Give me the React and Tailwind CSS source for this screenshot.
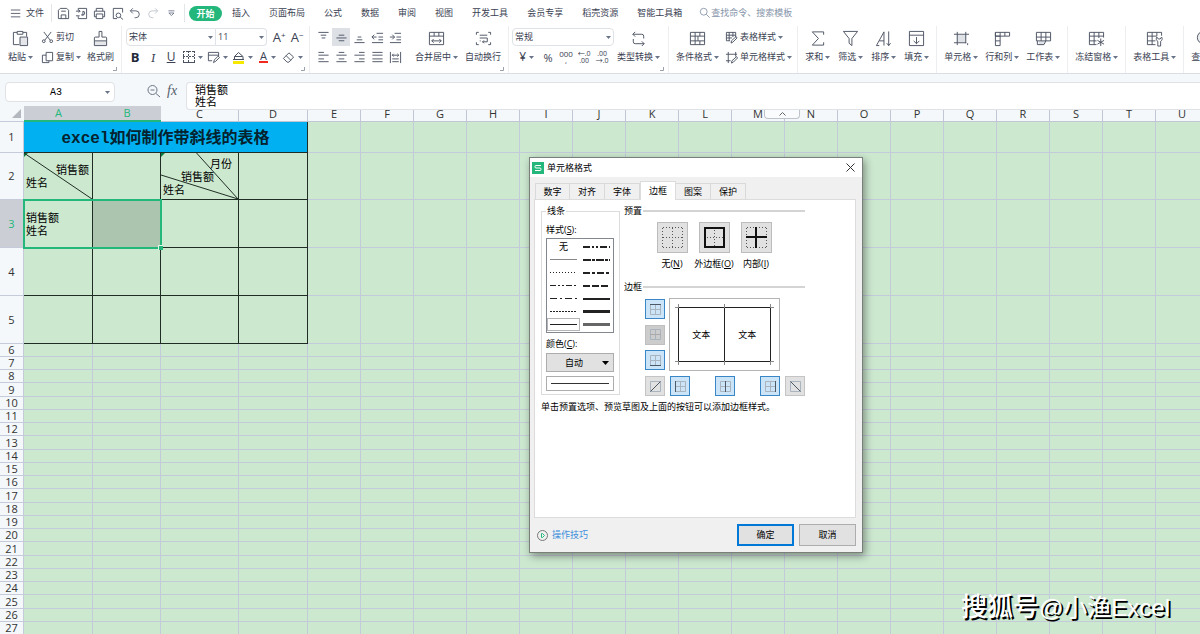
import React, { useState } from 'react'

const tabs = ['插入', '页面布局', '公式', '数据', '审阅', '视图', '开发工具', '会员专享', '稻壳资源', '智能工具箱']

const columns = 'ABCDEFGHIJKLMNOPQRSTU'.split('')

const smallRows = Array.from({ length: 22 }, (_, i) => i + 6)

const lineStyles = [
  null,
  { w: 2, dash: '7 2 2 2 2 2' },
  { w: 1, dash: '', color: '#888' },
  { w: 2, dash: '8 1 3 1' },
  { w: 1, dash: '1 2' },
  { w: 2, dash: '7 2 3 2' },
  { w: 1, dash: '6 2 2 2 2 2' },
  { w: 2, dash: '7 2' },
  { w: 1, dash: '7 3 2 3' },
  { w: 2, dash: '' },
  { w: 1, dash: '2 1' },
  { w: 3, dash: '' },
  { w: 1, dash: '' },
  { w: 3, dash: '', color: '#666' },
]

const icons = {
  menu: 'M1 3.5h11M1 7.5h11M1 11.5h11',
  save: 'M1.5 12.5v-9l2-2h7l2 2v9zM4.5 12.5v-4h5v4M4.5 4.5h5',
  output: 'M3.5 4V1.5h9v11h-9V10M1 4.5h4.500M4 3l1.500 1.500L4 6M1 9.500h4M8.500 4.500a2 2 0 1 1 0 4h-2M8.500 4.500v5',
  print: 'M3.500 4.500v-3h7v3M3.500 10.500h-2v-6h11v6h-2M3.500 7.500h7v5h-7z',
  preview: 'M12.500 6V1.500h-10v11h4M10.500 9a2.500 2.500 0 1 1-5 0a2.500 2.500 0 0 1 5 0M10 11l3 2.500',
  undo: 'M4.500 1.500l-3 3l3 3M2 4.500h6a4 4 0 0 1 0 8H6.500',
  redo: 'M9.500 1.500l3 3l-3 3M12 4.500H6a4 4 0 0 0 0 8h1.500',
  more: 'M4 4.500h7M4.500 7l3 3l3-3z',
  search: 'M9.500 5.500a4 4 0 1 1-8 0a4 4 0 0 1 8 0M8.500 8.500l4 4',
  zoom: 'M10 6a4.500 4.500 0 1 1-9 0a4.500 4.500 0 0 1 9 0M9 9.500l4 3.500M3.500 6h4',
  cut: 'M3 1l7 9M11 1L4 10M4.500 11a1.500 1.500 0 1 1-3 0a1.500 1.500 0 0 1 3 0M12.500 11a1.500 1.500 0 1 1-3 0a1.500 1.500 0 0 1 3 0',
  copy: 'M5.500 1.500h7v9h-7zM5.500 4.500h-4v8h7v-2',
  drawBorder: 'M12.500 6V1.500h-11v9h4M1.500 4.500h11M7 12.500l1-3l4-4l1.500 1.500l-4 4z',
  eraser: 'M1.500 8l6-6l5 4.500l-5 5.500h-2zM4.500 5l5 5',
  top: 'M1.500 1.500h11M4 4.500h6M5 7.500h4',
  middle: 'M4 4.500h6M1.500 7.500h11M4 10.500h6',
  bottom: 'M5 6.500h4M4 9.500h6M1.500 12.500h11',
  outdent: 'M6 2.500h7M8 6.500h5M8 9.500h5M1 12.500h12M6 6.500H1M3.500 4L1 6.500l2.500 2.500',
  indent: 'M6 2.500h7M8 6.500h5M8 9.500h5M1 12.500h12M1 6.500h5M3.500 4L6 6.500L3.500 9',
  left: 'M1.500 1.500h6M1.500 4.500h11M1.500 8.500h6M1.500 11.500h11',
  center: 'M4 1.500h6M1.500 4.500h11M4 8.500h6M1.500 11.500h11',
  right: 'M6.500 1.500h6M1.500 4.500h11M6.500 8.500h6M1.500 11.500h11',
  justify: 'M1.500 1.500h11M1.500 4.500h11M1.500 8.500h11M1.500 11.500h11',
  spread: 'M1.500 1v12M12.500 1v12M3.500 4.500h7M5 3L3.500 4.500L5 6M9 3l1.500 1.500L9 6M3.500 8.500h7M3.500 11.500h7',
  tableStyle: 'M1.500 1.500h10v5M1.500 1.500v9h4M1.500 4.500h10M1.500 7.500h6M4.500 1.500v9M8.500 1.500v5M6.500 13l.5-2.500l5-4.500l1 1.500l-4.500 4.500z',
  cellStyle: 'M3.500 1v12M1 3.500h12M11.500 1v5M1 10.500h5M7 13l.5-2.500l5-4.500l1 1.500l-4.500 4.500z',
}

// larger drawings on an 18px box
const bigIcons = {
  paste: (
    <>
      <path d="M8 8h8v8H8z" fill="#e4e6ea" stroke="none" />
      <path d="M5.500 2.500h-4v13h6M11.500 2.500h4V7M5.500 1.500h6v3h-6zM8.500 7.500h8v9h-8z" />
    </>
  ),
  painter: (
    <>
      <path d="M3 12h12l1 4H2z" fill="#e4e6ea" stroke="none" />
      <path d="M7.500 1.500h3v6h4a1 1 0 0 1 1 1v3h-13v-3a1 1 0 0 1 1-1h4zM2.500 11.500v5h13v-5" />
    </>
  ),
  merge: <path d="M1.500 2.500h15v13h-15zM1.500 6.500h15M6.500 2.500v4M11.500 2.500v4M4 11.500h10M6 9.500l-2 2l2 2M12 9.500l2 2l-2 2" />,
  wrap: <path d="M1.500 5V2.500H4M14 2.500h2.500V5M1.500 13v2.500H4M14 15.500h2.500V13M5 5.500h8M5 8.500h8v4H8M9.500 11L8 12.500L9.500 14M5 11.500h1" />,
  convert: <path d="M3 4.500h9.500a2 2 0 0 1 2 2V9M5.500 2L3 4.500L5.500 7M15 14.500H5.500a2 2 0 0 1-2-2V9.500M12.500 12l2.500 2.500l-2.500 2.500" />,
  condition: <path d="M1.500 2.500h15v13h-15zM1.500 6.500h15M1.500 11.500h15M6.500 2.500v9M11.500 2.500v4M9.500 6.500v5M6.500 11.500v4M11.500 11.500v4" />,
  sum: <path d="M15.500 5V2h-12l6.500 7l-6.500 7h12v-3" />,
  filter: <path d="M1.500 1.500h15l-6 7.500v7.500l-3-2.500V9z" />,
  sort: <path d="M1.500 16.500l8-14.500v14.500M4.500 11.500h5M1.500 16.500h3M14.500 1.500v15M12.500 14l2 2.500l2-2.500" />,
  fill: <path d="M1.500 1.500h15v15h-15zM1.500 5.500h15M9 7.500v7M6 11.500l3 3l3-3" />,
  cell: (
    <>
      <path d="M4 5h10v8H4z" fill="#dfe2e6" stroke="none" />
      <path d="M1 4.500h16M1 13.500h13M4.500 2v14M13.500 2v12M15.500 14v2" />
    </>
  ),
  rowCol: <path d="M1.500 2.500h15v4h-15zM1.500 2.500v14h5v-14M1.500 11.500h5M11.500 2.500v4M1.500 6.500h5" />,
  sheet: (
    <>
      <path d="M4 12h7l-2 4H4z" fill="#dfe2e6" stroke="none" />
      <path d="M1.500 2.500h15v9h-15zM1.500 7.500h15M6.500 2.500v9M11.500 2.500v9M2.500 11.500v4h7l2-4" />
    </>
  ),
  freeze: <path d="M9 15.500H1.500v-13h15V8M1.500 6.500h15M1.500 11.500H9M6.500 2.500v13M11.500 2.500v6M13.500 9v8M10 11l7 4M17 11l-7 4" />,
  tools: <path d="M10 15.500H1.500v-13h15V6M1.500 6.500h10M1.500 11.500H10M6.500 2.500v13M11.500 2.500v4M12.500 17v-5a3 3 0 0 1-1-4.500l1.500 2h2l1.500-2a3 3 0 0 1-1 4.500v5z" />,
  find: <path d="M15.500 8a6.500 6.500 0 1 1-13 0a6.500 6.500 0 0 1 13 0M13.500 13l4 4" fill="#eceef0" />,
}

function Icon({ name, size = 13, className = 'text-[#4b5262]' }) {
  return (
    <svg width={size} height={size} viewBox="0 0 14 14" fill="none" stroke="currentColor" className={`shrink-0 ${className}`}>
      <path d={icons[name]} />
    </svg>
  )
}

function Caret() {
  return (
    <svg width="5" height="3" viewBox="0 0 5 3" className="pointer-events-none shrink-0 text-[#6a7488]">
      <path d="M0 0h5L2.500 3z" fill="currentColor" />
    </svg>
  )
}

function Group({ children, launcher, className = 'px-[7px]' }) {
  return (
    <div className={`relative flex h-full shrink-0 border-r border-[#eceef0] ${className}`}>
      {children}
      {launcher && (
        <svg width="5" height="5" viewBox="0 0 5 5" className="absolute bottom-0.5 right-1 text-[#9aa1ad]">
          <path d="M4.500 1v3.500H1" fill="none" stroke="currentColor" />
        </svg>
      )}
    </div>
  )
}

function BigButton({ icon, label, caret = true }) {
  return (
    <button type="button" className="flex shrink-0 flex-col items-center gap-1 pt-1">
      <svg width="17" height="17" viewBox="0 0 18 18" fill="none" stroke="#4b5262">{bigIcons[icon]}</svg>
      <span className="flex items-center gap-0.5 whitespace-nowrap leading-3">
        {label}
        {caret && <Caret />}
      </span>
    </button>
  )
}

function SmallButton({ icon, label, caret = true }) {
  return (
    <button type="button" className="flex h-[18px] items-center gap-0.5 whitespace-nowrap">
      <Icon name={icon} size={13} />
      {label}
      {caret && <Caret />}
    </button>
  )
}

function Tool({ label, children, caret, active }) {
  return (
    <button
      type="button"
      aria-label={label}
      className={`flex h-[18px] items-center justify-center gap-[3px] ${caret ? 'w-[25px]' : 'w-[18px]'} ${active ? 'bg-[#dde1e6]' : ''}`}
    >
      {children}
      {caret && <Caret />}
    </button>
  )
}

function SelectBox({ label, value, className }) {
  return (
    <div className={`relative flex h-[18px] items-center border border-[#dfe2e6] ${className}`}>
      <select aria-label={label} className="h-full w-full appearance-none bg-transparent pl-0.5 text-[9px] outline-none">
        <option>{value}</option>
      </select>
      <span className="pointer-events-none absolute right-0.5 flex"><Caret /></span>
    </div>
  )
}

function MenuBar() {
  return (
    <nav className="flex h-[26px] items-center overflow-hidden whitespace-nowrap bg-white pl-2.5">
      <button type="button" className="flex items-center gap-1">
        <Icon name="menu" size={12} />
        文件
      </button>
      <span className="ml-[7px] mr-0.5 h-[18px] w-px bg-[#e3e5e8]" />
      <Tool label="保存"><Icon name="save" /></Tool>
      <Tool label="输出"><Icon name="output" /></Tool>
      <Tool label="打印"><Icon name="print" /></Tool>
      <Tool label="打印预览"><Icon name="preview" /></Tool>
      <Tool label="撤销"><Icon name="undo" size={12} /></Tool>
      <Tool label="恢复"><Icon name="redo" size={12} className="text-[#bcc1c9]" /></Tool>
      <Tool label="更多"><Icon name="more" size={12} className="text-[#6a7488]" /></Tool>
      <span className="mx-1 h-[18px] w-px bg-[#e3e5e8]" />
      <button type="button" className="h-[15px] w-[33px] rounded-full bg-[#23b77b] font-bold leading-[15px] text-white">开始</button>
      <div className="ml-2.5 flex gap-[19px]">
        {tabs.map((tab) => (
          <button key={tab} type="button">{tab}</button>
        ))}
      </div>
      <label className="ml-[17px] flex items-center text-[#8593a8]">
        <Icon name="search" size={12} className="text-[#8593a8]" />
        <input placeholder="查找命令、搜索模板" className="w-24 bg-transparent outline-none placeholder:text-[#8593a8]" />
      </label>
    </nav>
  )
}

function Ribbon() {
  return (
    <div className="flex h-12 overflow-hidden border-b border-[#dadde1] bg-white">
      <Group launcher className="pl-2 pr-[7px]">
        <BigButton icon="paste" label="粘贴" />
        <div className="ml-2 mr-1.5 flex flex-col gap-0.5 pt-0.5">
          <SmallButton icon="cut" label="剪切" caret={false} />
          <SmallButton icon="copy" label="复制" />
        </div>
        <BigButton icon="painter" label="格式刷" caret={false} />
      </Group>

      <Group launcher className="pl-1 pr-[3px]">
        <div className="flex flex-col gap-0.5 pt-0.5">
          <div className="flex">
            <SelectBox label="字体" value="宋体" className="w-[90px] rounded-l-sm" />
            <SelectBox label="字号" value="11" className="mr-[3px] w-[51px] rounded-r-sm border-l-0" />
            <Tool label="增大字号">
              <span className="text-[13px] leading-none">A<sup className="text-[8px]">+</sup></span>
            </Tool>
            <Tool label="减小字号">
              <span className="text-[13px] leading-none">A<sup className="text-[8px]">−</sup></span>
            </Tool>
          </div>
          <div className="flex">
            <Tool label="加粗"><b className="text-[13px] leading-none text-[#222838]">B</b></Tool>
            <Tool label="倾斜"><i className="font-serif text-[13px] leading-none">I</i></Tool>
            <Tool label="下划线"><u className="text-[12px] leading-none">U</u></Tool>
            <Tool label="边框" caret>
              <svg width="12" height="12" viewBox="0 0 12 12" fill="none" stroke="#4b5262">
                <path d="M.5 0v12M11.500 0v12M0 .5h12M5.500 0v12M0 5.500h12" strokeDasharray="2 1" />
                <path d="M0 11.500h12" />
              </svg>
            </Tool>
            <Tool label="绘图边框" caret><Icon name="drawBorder" /></Tool>
            <Tool label="填充颜色" caret>
              <svg width="13" height="13" viewBox="0 0 13 13" fill="none" stroke="#4b5262">
                <path d="M2.500 9V5.500l4-4l4.500 4V9M2.500 5.500h8M1 8.500h11" />
                <path d="M1 11.500h11" stroke="#f7e800" strokeWidth="3" />
              </svg>
            </Tool>
            <Tool label="字体颜色" caret>
              <span className="border-b-2 border-[#f0281e] px-px text-[11px] leading-[10px]">A</span>
            </Tool>
            <Tool label="清除" caret><Icon name="eraser" /></Tool>
          </div>
        </div>
      </Group>

      <Group launcher className="pl-1 pr-[7px]">
        <div className="mr-[11px] grid grid-cols-5 content-start gap-y-0.5 pt-0.5">
          <Tool label="顶端对齐"><Icon name="top" /></Tool>
          <Tool label="垂直居中" active><Icon name="middle" /></Tool>
          <Tool label="底端对齐"><Icon name="bottom" /></Tool>
          <Tool label="减少缩进"><Icon name="outdent" /></Tool>
          <Tool label="增加缩进"><Icon name="indent" /></Tool>
          <Tool label="左对齐"><Icon name="left" /></Tool>
          <Tool label="水平居中"><Icon name="center" /></Tool>
          <Tool label="右对齐"><Icon name="right" /></Tool>
          <Tool label="两端对齐"><Icon name="justify" /></Tool>
          <Tool label="分散对齐"><Icon name="spread" /></Tool>
        </div>
        <div className="flex gap-[7px]">
          <BigButton icon="merge" label="合并居中" />
          <BigButton icon="wrap" label="自动换行" caret={false} />
        </div>
      </Group>

      <Group launcher className="pl-[3px] pr-2">
        <div className="mr-[3px] flex flex-col gap-0.5 pt-0.5">
          <SelectBox label="数字格式" value="常规" className="w-[102px] rounded-sm" />
          <div className="flex pl-0.5">
            <Tool label="货币" caret><span className="text-[12px] leading-none">¥</span></Tool>
            <Tool label="百分比"><span className="text-[11px] leading-none">%</span></Tool>
            <Tool label="千位分隔"><span className="text-[8px] leading-[6px]">000<br />,</span></Tool>
            <Tool label="增加小数"><span className="text-[7px] leading-[7px]">←.0<br />.00</span></Tool>
            <Tool label="减少小数"><span className="text-[7px] leading-[7px]">.00<br />→.0</span></Tool>
          </div>
        </div>
        <BigButton icon="convert" label="类型转换" />
      </Group>

      <Group className="pl-[7px] pr-[5px]">
        <BigButton icon="condition" label="条件格式" />
        <div className="ml-1.5 flex flex-col gap-0.5 pt-0.5">
          <SmallButton icon="tableStyle" label="表格样式" />
          <SmallButton icon="cellStyle" label="单元格样式" />
        </div>
      </Group>

      <Group className="gap-2 px-[7px]">
        <BigButton icon="sum" label="求和" />
        <BigButton icon="filter" label="筛选" />
        <BigButton icon="sort" label="排序" />
        <BigButton icon="fill" label="填充" />
      </Group>

      <Group className="gap-[7px] px-[7px]">
        <BigButton icon="cell" label="单元格" />
        <BigButton icon="rowCol" label="行和列" />
        <BigButton icon="sheet" label="工作表" />
      </Group>

      <Group><BigButton icon="freeze" label="冻结窗格" /></Group>
      <Group><BigButton icon="tools" label="表格工具" /></Group>
      <Group><BigButton icon="find" label="查找" /></Group>
    </div>
  )
}

function FormulaBar() {
  return (
    <div className="relative z-10 flex h-9 shrink-0 items-start pl-[5px] pt-2">
      <div className="relative flex h-5 w-[110px] items-center rounded-sm border border-[#dfe2e6] bg-white">
        <input
          aria-label="名称框"
          defaultValue="A3"
          className="w-full bg-transparent pr-2 pt-px text-center font-['Liberation_Mono',monospace] text-[10px] text-black outline-none"
        />
        <span className="absolute right-1"><Caret /></span>
      </div>
      <div className="flex h-[18px] w-[71px] items-center gap-1.5 pl-[32px]">
        <Icon name="zoom" size={14} className="text-[#6b7486]" />
        <i className="font-['Liberation_Serif',serif] text-[14px] leading-none text-[#555d6d]">fx</i>
      </div>
      <textarea
        aria-label="编辑栏"
        defaultValue={'销售额\n姓名'}
        className="h-7 flex-1 resize-none overflow-hidden rounded-l-sm border border-r-0 border-[#dfe2e6] bg-white pl-2 pt-px text-[11px] leading-3 text-black outline-none"
      />
      <button type="button" aria-label="折叠" className="absolute left-[764px] top-9 flex h-[9px] w-9 items-center justify-center rounded-b-sm border border-t-0 border-[#bfc4cc] bg-[#fafbfc]">
        <svg width="7" height="4" viewBox="0 0 7 4"><path d="M.5 3.500l3-3l3 3" fill="none" stroke="#666" /></svg>
      </button>
    </div>
  )
}

function Corner() {
  return (
    <svg width="4" height="4" viewBox="0 0 4 4" className="absolute left-0 top-0">
      <path d="M0 0h4L0 4z" fill="#0c7a3c" />
    </svg>
  )
}

function RowHead({ n, active }) {
  return (
    <th className={`border-b border-r border-[#c6cbdc] p-0 text-center text-[11px] font-normal leading-3 ${active ? 'bg-[#cbcfd5] text-[#23b77b]' : 'bg-[#f4f8fa] text-[#333]'}`}>
      {n}
    </th>
  )
}

function EmptyCells({ from }) {
  return (
    <>
      {columns.slice(from).map((c) => (
        <td key={c} className="border-b border-r border-[#c3cad9] p-0" />
      ))}
      <td className="border-b border-[#c3cad9] p-0" />
    </>
  )
}

const boxed = 'relative border-b border-r border-[#1f2d24] p-0 text-[11px] leading-[13px] text-black'

function Sheet() {
  return (
    <div className="-mt-1 flex-1 overflow-hidden bg-[#cce8cf]">
      <table className="w-full table-fixed border-separate border-spacing-0">
        <colgroup>
          <col className="w-6" />
          <col className="w-[69px]" />
          <col className="w-[68px]" />
          <col className="w-[78px]" />
          <col className="w-[69px]" />
          {columns.slice(4).map((c) => <col key={c} className="w-[53px]" />)}
          <col />
        </colgroup>
        <thead>
          <tr className="h-4 bg-[#f4f8fa] text-[11px] leading-3">
            <th className="border-b border-[#c6cbdc] p-0">
              <svg width="9" height="9" viewBox="0 0 9 9" className="ml-3"><path d="M9 0v9H0z" fill="#b3b8bf" /></svg>
            </th>
            {columns.map((c, i) => (
              <th
                key={c}
                className={`p-0 font-normal ${i < 2 ? 'border-b-2 border-[#23b77b] bg-[#cbcfd5] text-[#23b77b]' : 'border-b border-r border-[#c0c6d4] text-[#333]'}`}
              >
                {c}
              </th>
            ))}
            <th className="border-b border-[#c0c6d4] p-0" />
          </tr>
        </thead>
        <tbody>
          <tr className="h-[31px]">
            <RowHead n={1} />
            <td colSpan={4} className="border-b border-r border-[#1f2d24] bg-[#00b0f0] p-0 pt-1 text-center font-['Liberation_Mono','Noto_Sans_CJK_SC',monospace] text-[16px] font-bold leading-5 text-[#06222e]">
              excel如何制作带斜线的表格
            </td>
            <EmptyCells from={4} />
          </tr>
          <tr className="h-[47px]">
            <RowHead n={2} />
            <td className={boxed}>
              <Corner />
              <svg viewBox="0 0 68 46" preserveAspectRatio="none" className="absolute inset-0 h-full w-full">
                <path d="M0 0L68 46" stroke="#1f2d24" fill="none" />
              </svg>
              <div className="pl-0.5 pr-[3px]">
                <p className="text-right">销售额</p>
                <p>姓名</p>
              </div>
            </td>
            <td className={boxed} />
            <td className={boxed}>
              <Corner />
              <svg viewBox="0 0 78 46" preserveAspectRatio="none" className="absolute inset-0 h-full w-full">
                <path d="M36 0L78 46M0 22L78 46" stroke="#1f2d24" fill="none" />
              </svg>
              <div className="pl-0.5 pr-1.5">
                <p className="text-right">月份</p>
                <p className="text-center">销售额</p>
                <p>姓名</p>
              </div>
            </td>
            <td className={boxed} />
            <EmptyCells from={4} />
          </tr>
          <tr className="h-12">
            <RowHead n={3} active />
            <td className={boxed}>
              <div className="pl-0.5">
                <p>销售额</p>
                <p>姓名</p>
              </div>
              <span className="pointer-events-none absolute -left-px -top-px z-10 h-[50px] w-[139px] border-2 border-[#23b77b]">
                <span className="absolute -bottom-[3px] -right-[3px] h-[5px] w-[5px] border-l border-t border-[#e6f5e8] bg-[#23b77b]" />
              </span>
            </td>
            <td className={`${boxed} bg-[#acc5af]`} />
            <td className={boxed} />
            <td className={boxed} />
            <EmptyCells from={4} />
          </tr>
          {[4, 5].map((n) => (
            <tr key={n} className="h-12">
              <RowHead n={n} />
              <td className={boxed} />
              <td className={boxed} />
              <td className={boxed} />
              <td className={boxed} />
              <EmptyCells from={4} />
            </tr>
          ))}
          {smallRows.map((n) => (
            <tr key={n} className={n % 4 === 1 ? 'h-[14px]' : 'h-[13px]'}>
              <RowHead n={n} />
              <EmptyCells from={0} />
            </tr>
          ))}
        </tbody>
      </table>
    </div>
  )
}

function Preset({ label, hotkey, children }) {
  return (
    <label className="flex w-[42px] flex-col items-center gap-[5px] whitespace-nowrap leading-3">
      <button type="button" className="flex h-[31px] w-[31px] items-center justify-center border border-[#bcbcbc] bg-[#e1e1e1]">
        <svg width="21" height="21" viewBox="0 0 21 21" fill="none" stroke="#555">{children}</svg>
      </button>
      <span>{label}(<u>{hotkey}</u>)</span>
    </label>
  )
}

function EdgeButton({ label, edge, on, disabled }) {
  let look = 'border-[#c4c4c4] bg-[#e1e1e1]'
  if (on) look = 'border-[#3a87c8] bg-[#cce4f7]'
  if (disabled) look = 'border-[#bfbfbf] bg-[#cccccc]'
  const diagonal = label.includes('斜')
  return (
    <button type="button" aria-label={label} disabled={disabled} className={`flex h-5 w-5 items-center justify-center border ${look}`}>
      <svg width="11" height="11" viewBox="0 0 11 11" fill="none">
        <path d={diagonal ? 'M.5.500h10v10H.5z' : 'M.5.500h10v10H.5zM5.500 0v11M0 5.500h11'} stroke="#a9b4be" />
        <path d={edge} stroke={disabled ? '#aaa' : '#4d5a66'} />
      </svg>
    </button>
  )
}

function SectionTitle({ children }) {
  return (
    <div className="flex items-center gap-px leading-3">
      {children}
      <span className="h-0.5 flex-1 bg-[#d4d4d4]" />
    </div>
  )
}

function FormatDialog() {
  const [style, setStyle] = useState(12)

  return (
    <div role="dialog" aria-label="单元格格式" className="absolute left-[529px] top-[157px] z-20 w-[334px] border border-[#7b7f7c] bg-[#f0f0f0] text-black shadow-[2px_3px_8px_rgba(0,0,0,0.4)]">
      <div className="flex h-[19px] items-center bg-white pl-0.5 pr-[7px]">
        <svg width="12" height="12" viewBox="0 0 12 12">
          <path d="M0 0h12v12H0z" fill="#23b77b" />
          <path d="M9 3.500H4a1 1 0 0 0-1 1v.5a1 1 0 0 0 1 1h4a1 1 0 0 1 1 1v.5a1 1 0 0 1-1 1H3" fill="none" stroke="#fff" />
        </svg>
        <span className="ml-[3px] flex-1">单元格格式</span>
        <button type="button" aria-label="关闭">
          <svg width="9" height="9" viewBox="0 0 9 9"><path d="M.5.500l8 8M8.500.500l-8 8" stroke="#333" fill="none" /></svg>
        </button>
      </div>

      <div className="flex h-[22px] items-end pl-[5px]">
        {['数字', '对齐', '字体', '边框', '图案', '保护'].map((tab) => (
          <button
            key={tab}
            type="button"
            className={tab === '边框'
              ? 'relative z-10 -mb-px h-[19px] w-9 border border-b-0 border-[#dcdcdc] bg-white leading-4'
              : 'h-4 w-[35px] border border-b-0 border-l-0 border-[#d9d9d9] leading-[15px] first:border-l'}
          >
            {tab}
          </button>
        ))}
      </div>

      <div className="ml-1 mr-1.5 h-[319px] border border-[#dcdcdc] bg-white px-1.5 pt-[5px]">
        <div className="flex gap-1">
          <fieldset className="h-[190px] w-[79px] shrink-0 border border-[#dcdcdc] px-1">
            <legend className="px-px leading-3">线条</legend>
            <p className="mt-[7px] leading-3">样式(<u>S</u>):</p>
            <div role="listbox" aria-label="样式" className="mt-0.5 grid w-[68px] grid-cols-2 border border-[#828790] py-px">
              {lineStyles.map((line, i) => (
                <button
                  key={i}
                  type="button"
                  role="option"
                  aria-selected={i === style}
                  onClick={() => setStyle(i)}
                  className={`flex h-[13px] items-center justify-center leading-3 ${i === style ? 'border border-[#b5b5b5]' : ''}`}
                >
                  {line ? (
                    <svg width="27" height="4" viewBox="0 0 27 4" className="shrink-0">
                      <path d={line.w % 2 ? 'M0 1.500h27' : 'M0 2h27'} stroke={line.color || '#222'} strokeWidth={line.w} strokeDasharray={line.dash} />
                    </svg>
                  ) : '无'}
                </button>
              ))}
            </div>
            <label htmlFor="line-color" className="mt-[5px] block leading-3">颜色(<u>C</u>):</label>
            <div className="relative mt-[3px] flex h-[19px] w-[68px] items-center border border-[#adadad] bg-[#e1e1e1]">
              <select id="line-color" className="h-full w-full appearance-none bg-transparent pl-[18px] text-[9px] outline-none">
                <option>自动</option>
              </select>
              <svg width="7" height="4" viewBox="0 0 7 4" className="pointer-events-none absolute right-1"><path d="M0 0h7L3.500 4z" /></svg>
            </div>
            <div className="mt-1 flex h-[15px] w-[68px] items-center border border-[#adadad] px-1">
              <span className="h-px flex-1 bg-[#333]" />
            </div>
          </fieldset>

          <div className="w-[181px]">
            <SectionTitle>预置</SectionTitle>
            <div className="mt-[5px] flex pl-[27px]">
              <Preset label="无" hotkey="N">
                <path d="M1 .5h20M1 10.500h20M1 20.500h20M.5 1v20M10.500 1v20M20.500 1v20" strokeDasharray="1 2" />
              </Preset>
              <Preset label="外边框" hotkey="O">
                <path d="M3 10.500h16M10.500 3v16" strokeDasharray="1 2" />
                <path d="M1 1h19v19H1z" stroke="#111" strokeWidth="2" />
              </Preset>
              <Preset label="内部" hotkey="I">
                <path d="M1 .5h20M1 20.500h20M.5 1v20M20.500 1v20" strokeDasharray="1 2" />
                <path d="M0 10h21M10 0v21" stroke="#111" strokeWidth="2" />
              </Preset>
            </div>

            <div className="mt-[11px]"><SectionTitle>边框</SectionTitle></div>
            <div className="mt-[5px] flex gap-1 pl-[21px]">
              <div className="flex flex-col justify-between py-px">
                <EdgeButton label="上边框" edge="M0 .5h11" on />
                <EdgeButton label="横向内边框" edge="M0 5.500h11" disabled />
                <EdgeButton label="下边框" edge="M0 10.500h11" on />
              </div>
              <div className="relative h-[73px] w-[111px] border border-[#b4b4b4] p-2">
                <svg width="109" height="71" viewBox="0 0 109 71" className="absolute left-0 top-0" fill="none" stroke="#8a8a8a">
                  <path d="M5 8.500h4M8.500 5v4M100 8.500h4M100.500 5v4M5 62.500h4M8.500 62v4M100 62.500h4M100.500 62v4M54.500 5v4M54.500 62v4" />
                </svg>
                <div className="grid h-full grid-cols-2 border border-[#222]">
                  <span className="flex items-center justify-center border-r border-[#222]">文本</span>
                  <span className="flex items-center justify-center">文本</span>
                </div>
              </div>
            </div>
            <div className="mt-[5px] flex gap-[5px] pl-[21px]">
              <EdgeButton label="右斜线" edge="M.5 10.500l10-10" />
              <div className="flex w-[110px] justify-between">
                <EdgeButton label="左边框" edge="M.5 0v11" on />
                <EdgeButton label="竖向内边框" edge="M5.500 0v11" on />
                <EdgeButton label="右边框" edge="M10.500 0v11" on />
              </div>
              <EdgeButton label="左反斜线" edge="M.5.500l10 10" />
            </div>
          </div>
        </div>
        <p className="mt-[5px] whitespace-nowrap leading-3">单击预置选项、预览草图及上面的按钮可以添加边框样式。</p>
      </div>

      <div className="flex items-center gap-[5px] pb-1.5 pl-[5px] pr-1.5 pt-1.5">
        <a href="#tips" className="mr-auto flex items-center gap-1 pl-0.5 text-[#3d8fdc]">
          <svg width="11" height="11" viewBox="0 0 11 11" fill="none">
            <circle cx="5.500" cy="5.500" r="5" stroke="#777" />
            <path d="M4.500 3.500v4h1l2-2l-2-2z" stroke="#23b77b" />
          </svg>
          操作技巧
        </a>
        <button type="button" className="h-[22px] w-[57px] border-2 border-[#0078d7] bg-[#e1e1e1]">确定</button>
        <button type="button" className="h-[22px] w-[57px] border border-[#adadad] bg-[#e1e1e1]">取消</button>
      </div>
    </div>
  )
}

export default function App() {
  return (
    <div className="relative flex h-screen flex-col overflow-hidden bg-[#f4f8fa] font-['Open_Sans','Noto_Sans_CJK_SC',sans-serif] text-[9px] leading-3 text-[#3a4152]">
      <MenuBar />
      <Ribbon />
      <FormulaBar />
      <Sheet />
      <FormatDialog />
      <p className="pointer-events-none absolute bottom-2.5 right-[30px] whitespace-nowrap font-['Liberation_Sans','Noto_Sans_CJK_SC',sans-serif] text-[24px] leading-8 text-white [text-shadow:2px_2px_0_#000]">
        <span className="text-[26px] font-medium">搜狐号</span>@小渔Excel
      </p>
    </div>
  )
}
